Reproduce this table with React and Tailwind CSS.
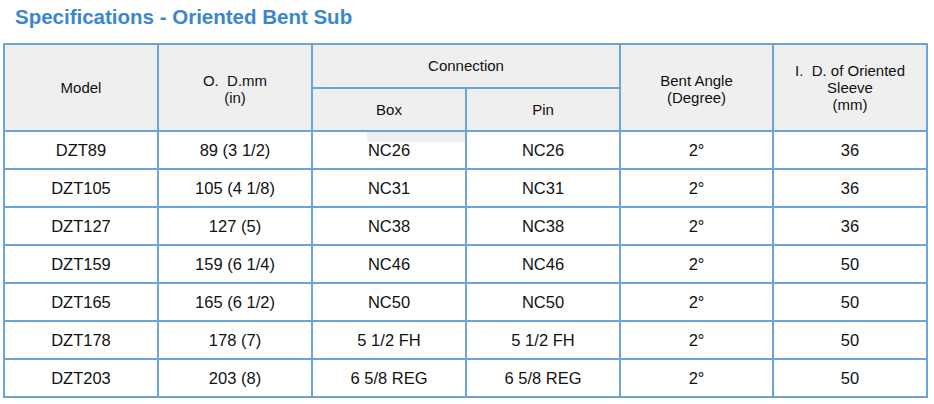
import React from "react";

const rows = [
  ["DZT89", "89 (3 1/2)", "NC26", "NC26", "2°", "36"],
  ["DZT105", "105 (4 1/8)", "NC31", "NC31", "2°", "36"],
  ["DZT127", "127 (5)", "NC38", "NC38", "2°", "36"],
  ["DZT159", "159 (6 1/4)", "NC46", "NC46", "2°", "50"],
  ["DZT165", "165 (6 1/2)", "NC50", "NC50", "2°", "50"],
  ["DZT178", "178 (7)", "5 1/2 FH", "5 1/2 FH", "2°", "50"],
  ["DZT203", "203 (8)", "6 5/8 REG", "6 5/8 REG", "2°", "50"],
];

const th = "border-2 border-[#6aa4db] bg-[#efefef] text-center align-middle font-normal text-[15px] leading-[17px] text-[#111]";
const td = "border-2 border-[#6aa4db] text-center align-middle text-[16.5px] text-[#111]";

export default function App() {
  return (
    <div className="w-[934px] h-[404px] bg-white" style={{ fontFamily: '"Liberation Sans", Arial, sans-serif' }}>
      <div className="h-[43px] pl-[15px] pt-[4px] text-[20.5px] font-bold text-[#3b87cf] leading-[26px]">
        Specifications - Oriented Bent Sub
      </div>
      <table className="ml-[3px] w-[923px] table-fixed border-collapse">
        <colgroup>
          <col className="w-[154px]" />
          <col className="w-[154px]" />
          <col className="w-[154px]" />
          <col className="w-[154px]" />
          <col className="w-[153px]" />
          <col className="w-[154px]" />
        </colgroup>
        <thead>
          <tr className="h-[44px]">
            <th rowSpan={2} className={th}>Model</th>
            <th rowSpan={2} className={th}>
              <div className="whitespace-pre pt-[2px]">{"O.  D.mm\n(in)"}</div>
            </th>
            <th colSpan={2} className={th}>
              <div className="pb-[1px]">Connection</div>
            </th>
            <th rowSpan={2} className={th}>
              <div className="pt-[2px]">Bent Angle<br />(Degree)</div>
            </th>
            <th rowSpan={2} className={th}>
              <div className="whitespace-pre">{"I.  D. of Oriented\nSleeve\n(mm)"}</div>
            </th>
          </tr>
          <tr className="h-[43px]">
            <th className={th}>Box</th>
            <th className={th}>Pin</th>
          </tr>
        </thead>
        <tbody>
          {rows.map((r, i) => (
            <tr key={i} className="h-[38px]">
              {r.map((c, j) => (
                <td key={j} className={td + (i === 0 && j === 2 ? " relative" : "")}>
                  {i === 0 && j === 2 && (
                    <div className="absolute right-0 top-0 h-[10px] w-[98px] bg-[#efefef]" />
                  )}
                  <span className="relative">{c}</span>
                </td>
              ))}
            </tr>
          ))}
        </tbody>
      </table>
    </div>
  );
}
